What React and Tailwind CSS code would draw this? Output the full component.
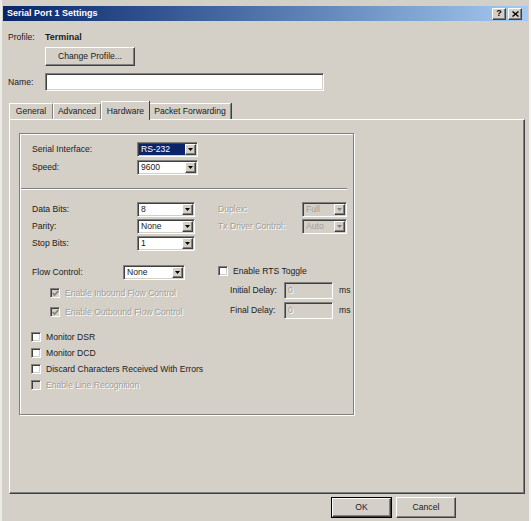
import React from 'react';

const face = "font-['Liberation_Sans',Arial,sans-serif]";

// classic 3D edges
const sunken =
  'border border-t-[#808080] border-l-[#808080] border-b-white border-r-white shadow-[inset_1px_1px_0_#404040,inset_-1px_-1px_0_#d4d0c8]';
const raised =
  'border border-t-white border-l-white border-b-[#404040] border-r-[#404040] shadow-[inset_-1px_-1px_0_#808080]';
const dim = 'text-[#a19e97] [text-shadow:1px_1px_0_#fff]';

function Combo({ value, className = '', highlight = false, disabled = false }) {
  return (
    <div
      className={`flex h-[15px] shrink-0 p-[1px] ${sunken} ${disabled ? 'bg-[#d4d0c8]' : 'bg-white'} ${className}`}
    >
      <div
        className={`flex flex-1 items-center pl-[2px] leading-none ${
          highlight ? 'bg-[#0a246a] text-white' : disabled ? 'text-[#a19e97]' : 'text-[#1a1a1a]'
        }`}
      >
        {value}
      </div>
      <div className={`flex w-[11px] items-center justify-center bg-[#d4d0c8] ${raised}`}>
        <svg width="5" height="3" viewBox="0 0 5 3">
          <path d="M0 0h5L2.5 3z" fill={disabled ? '#808080' : '#000'} />
        </svg>
      </div>
    </div>
  );
}

function Box({ checked = false, disabled = false }) {
  return (
    <span
      className={`flex h-[10px] w-[10px] shrink-0 items-center justify-center ${sunken} ${
        disabled ? 'bg-[#d4d0c8]' : 'bg-white'
      }`}
    >
      {checked && (
        <svg width="7" height="7" viewBox="0 0 7 7">
          <polyline
            points="0.6,3 2.5,5 6.4,1"
            fill="none"
            stroke={disabled ? '#808080' : '#000'}
            strokeWidth="1.6"
          />
        </svg>
      )}
    </span>
  );
}

function CheckRow({ label, checked, disabled, className = '' }) {
  return (
    <div className={`flex h-[10px] items-center gap-[5px] ${className}`}>
      <Box checked={checked} disabled={disabled} />
      <span className={`leading-none ${disabled ? dim : ''}`}>{label}</span>
    </div>
  );
}

function Field({ label, labelClass, combo }) {
  return (
    <div className="flex h-[15px] items-center">
      <span className={`${labelClass} shrink-0 leading-none`}>{label}</span>
      {combo}
    </div>
  );
}

function Button({ children, className = '', isDefault = false }) {
  return (
    <div className={`${isDefault ? 'border border-black' : ''} ${className}`}>
      <div className={`flex h-full w-full items-center justify-center bg-[#d4d0c8] ${raised}`}>
        {children}
      </div>
    </div>
  );
}

function Tab({ label, active = false, className = '' }) {
  if (active) {
    return (
      <div
        className={`relative z-10 -mb-[1px] flex h-[19px] items-center justify-center border-l border-t border-white bg-[#d4d0c8] shadow-[1px_0_0_#404040] ${className}`}
      >
        <span className="leading-none">{label}</span>
      </div>
    );
  }
  return (
    <div
      className={`mt-[2px] flex h-[16px] items-center justify-center border-l border-t border-white border-r border-r-[#808080] shadow-[1px_0_0_#404040] ${className}`}
    >
      <span className="leading-none">{label}</span>
    </div>
  );
}

export default function App() {
  return (
    <div
      className={`${face} h-[521px] w-[531px] overflow-hidden border-l-2 border-r-2 border-l-[#eeece8] border-r-[#f5f4f1] bg-[#d4d0c8] text-[8.6px] text-[#1a1a1a]`}
    >
      {/* title bar */}
      <div className="mx-[1px] mt-[6px] flex h-[15px] items-center justify-between bg-gradient-to-r from-[#0a246a] to-[#a6caf0] pl-[4px] pr-[6px]">
        <span className="text-[9px] font-bold leading-none text-white">Serial Port 1 Settings</span>
        <div className="flex gap-[2px]">
          <div className={`flex h-[12px] w-[14px] items-center justify-center bg-[#d4d0c8] ${raised}`}>
            <span className="text-[9px] font-bold leading-none text-black">?</span>
          </div>
          <div className={`flex h-[12px] w-[14px] items-center justify-center bg-[#d4d0c8] ${raised}`}>
            <svg width="7" height="6" viewBox="0 0 7 6">
              <path d="M0.5 0.5l6 5M6.5 0.5l-6 5" stroke="#000" strokeWidth="1.4" />
            </svg>
          </div>
        </div>
      </div>

      {/* profile + name */}
      <div className="pl-[6px]">
        <div className="mt-[10px] flex h-[12px] items-center">
          <span className="w-[37px] leading-none">Profile:</span>
          <span className="text-[9px] font-bold leading-none">Terminal</span>
        </div>
        <Button className="ml-[37px] mt-[4px] h-[19px] w-[90px]">
          <span className="leading-none">Change Profile...</span>
        </Button>
        <div className="mt-[7px] flex h-[18px] items-center">
          <span className="w-[37px] leading-none">Name:</span>
          <div className={`h-[18px] w-[279px] bg-white ${sunken}`} />
        </div>
      </div>

      {/* tabs */}
      <div className="ml-[7px] mt-[10px] flex h-[18px] items-start">
        <Tab label="General" className="w-[44px]" />
        <Tab label="Advanced" className="w-[48px]" />
        <Tab label="Hardware" active className="w-[48px]" />
        <Tab label="Packet Forwarding" className="w-[82px]" />
      </div>

      {/* tab page */}
      <div className="ml-[7px] h-[375px] w-[516px] border border-l-white border-t-white border-b-[#404040] border-r-[#404040] shadow-[inset_-1px_-1px_0_#808080]">
        <div className="ml-[9px] mt-[13px] h-[282px] w-[335px] border border-[#808080] shadow-[inset_1px_1px_0_#fff,1px_1px_0_#fff]">
          <div className="pl-[12px]">
            <div className="mt-[8px]">
              <Field
                label="Serial Interface:"
                labelClass="w-[105px]"
                combo={<Combo value="RS-232" highlight className="w-[61px]" />}
              />
            </div>
            <div className="mt-[3px]">
              <Field label="Speed:" labelClass="w-[105px]" combo={<Combo value="9600" className="w-[61px]" />} />
            </div>
          </div>

          <div className="ml-[1px] mr-[6px] mt-[13px] h-[2px] border-t border-b border-t-[#808080] border-b-white" />

          <div className="pl-[12px]">
            <div className="mt-[12px] flex">
              <div className="flex w-[186px] flex-col gap-[2px]">
                <Field label="Data Bits:" labelClass="w-[105px]" combo={<Combo value="8" className="w-[58px]" />} />
                <Field label="Parity:" labelClass="w-[105px]" combo={<Combo value="None" className="w-[58px]" />} />
                <Field label="Stop Bits:" labelClass="w-[105px]" combo={<Combo value="1" className="w-[58px]" />} />
              </div>
              <div className="flex flex-col gap-[2px]">
                <Field
                  label="Duplex:"
                  labelClass={`w-[84px] ${dim}`}
                  combo={<Combo value="Full" disabled className="w-[45px]" />}
                />
                <Field
                  label="Tx Driver Control:"
                  labelClass={`w-[84px] ${dim}`}
                  combo={<Combo value="Auto" disabled className="w-[45px]" />}
                />
              </div>
            </div>

            <div className="mt-[14px] flex">
              <div className="w-[186px]">
                <Field label="Flow Control:" labelClass="w-[91px]" combo={<Combo value="None" className="w-[62px]" />} />
                <CheckRow label="Enable Inbound Flow Control" checked disabled className="ml-[18px] mt-[8px]" />
                <CheckRow label="Enable Outbound Flow Control" checked disabled className="ml-[18px] mt-[9px]" />
              </div>
              <div>
                <CheckRow label="Enable RTS Toggle" className="mt-[1px]" />
                <div className="mt-[6px] flex h-[17px] items-center pl-[12px]">
                  <span className="w-[54px] leading-none">Initial Delay:</span>
                  <div className={`flex h-[17px] w-[49px] items-center pl-[3px] bg-[#d4d0c8] ${sunken}`}>
                    <span className={`leading-none ${dim}`}>0</span>
                  </div>
                  <span className="ml-[6px] leading-none">ms</span>
                </div>
                <div className="mt-[3px] flex h-[17px] items-center pl-[12px]">
                  <span className="w-[54px] leading-none">Final Delay:</span>
                  <div className={`flex h-[17px] w-[49px] items-center pl-[3px] bg-[#d4d0c8] ${sunken}`}>
                    <span className={`leading-none ${dim}`}>0</span>
                  </div>
                  <span className="ml-[6px] leading-none">ms</span>
                </div>
              </div>
            </div>

            <div className="-ml-[1px] mt-[13px] flex flex-col gap-[6px]">
              <CheckRow label="Monitor DSR" />
              <CheckRow label="Monitor DCD" />
              <CheckRow label="Discard Characters Received With Errors" />
              <CheckRow label="Enable Line Recognition" disabled />
            </div>
          </div>
        </div>
      </div>

      {/* dialog buttons */}
      <div className="ml-[329px] mt-[3px] flex gap-[4px]">
        <Button isDefault className="h-[21px] w-[61px]">
          <span className="leading-none">OK</span>
        </Button>
        <Button className="h-[21px] w-[60px]">
          <span className="leading-none">Cancel</span>
        </Button>
      </div>
    </div>
  );
}
